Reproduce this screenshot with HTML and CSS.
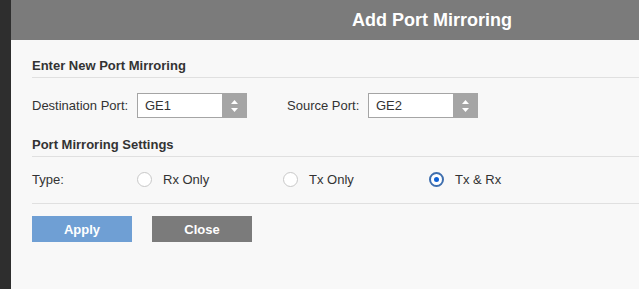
FILE: index.html
```html
<!DOCTYPE html>
<html lang="en">
<head>
    <meta charset="UTF-8">
    <meta name="viewport" content="width=device-width, initial-scale=1.0">
    <title>Add Port Mirroring</title>
    <link rel="stylesheet" href="styles.css">
</head>
<body>
    <div class="sidebar"></div>

    <div class="modal">
        <div class="modal-header">Add Port Mirroring</div>

        <div class="modal-body">
            <h2 class="section-title">Enter New Port Mirroring</h2>
            <div class="form-row">
                <label class="field-label">Destination Port:</label>
                <div class="select-box">
                    <span class="select-value">GE1</span>
                    <span class="select-arrow">
                        <svg width="9" height="14" viewBox="0 0 9 14"><path d="M4.5 1 L8 5 L1 5 Z M4.5 13 L8 9 L1 9 Z" fill="#fff"/></svg>
                    </span>
                </div>
                <label class="field-label short">Source Port:</label>
                <div class="select-box">
                    <span class="select-value">GE2</span>
                    <span class="select-arrow">
                        <svg width="9" height="14" viewBox="0 0 9 14"><path d="M4.5 1 L8 5 L1 5 Z M4.5 13 L8 9 L1 9 Z" fill="#fff"/></svg>
                    </span>
                </div>
            </div>

            <h2 class="section-title second">Port Mirroring Settings</h2>
            <div class="type-row">
                <span class="field-label">Type:</span>
                <label class="radio-option"><span class="radio"></span>Rx Only</label>
                <label class="radio-option"><span class="radio"></span>Tx Only</label>
                <label class="radio-option"><span class="radio checked"></span>Tx &amp; Rx</label>
            </div>

            <div class="actions">
                <button class="btn btn-apply">Apply</button>
                <button class="btn btn-close">Close</button>
            </div>
        </div>
    </div>
</body>
</html>
```

FILE: styles.css
```css
* {
    margin: 0;
    padding: 0;
    box-sizing: border-box;
}

body {
    font-family: "Liberation Sans", Arial, sans-serif;
    font-size: 13px;
    color: #333;
    background: #f8f8f8;
    display: flex;
    height: 100vh;
    overflow: hidden;
}

/* Dark strip on the left */
.sidebar {
    width: 11px;
    flex-shrink: 0;
    background: #2e2e2e;
}

.modal {
    flex: 1;
    min-width: 0;
    background: #f8f8f8;
}

.modal-header {
    height: 40px;
    line-height: 40px;
    background: #7b7b7b;
    color: #fff;
    font-size: 18px;
    font-weight: bold;
    text-align: center;
    padding-left: 214px;
}

.modal-body {
    padding: 18px 0 0 21px;
}

.section-title {
    font-size: 13px;
    font-weight: bold;
    line-height: 15px;
    color: #333;
    padding-bottom: 4px;
    border-bottom: 1px solid #e0e0e0;
}

.section-title.second {
    margin-top: 19px;
}

/* Port selects */
.form-row {
    display: flex;
    align-items: center;
    margin-top: 15px;
}

.field-label {
    width: 105px;
    flex-shrink: 0;
}

.field-label.short {
    width: 81px;
    margin-left: 40px;
}

.select-box {
    width: 110px;
    height: 25px;
    display: flex;
    border: 1px solid #a5a5a5;
    background: #fff;
}

.select-value {
    flex: 1;
    padding-left: 7px;
    line-height: 23px;
}

.select-arrow {
    width: 24px;
    background: #a5a5a5;
    display: flex;
    align-items: center;
    justify-content: center;
}

/* Type radios */
.type-row {
    display: flex;
    align-items: center;
    height: 47px;
    padding: 10px 0 12px;
    border-bottom: 1px solid #e0e0e0;
}

.radio-option {
    width: 146px;
    display: flex;
    align-items: center;
}

.radio {
    width: 15px;
    height: 15px;
    border-radius: 50%;
    border: 1px solid #c8c8c8;
    background: #fff;
    margin-right: 11px;
    display: flex;
    align-items: center;
    justify-content: center;
}

.radio.checked {
    border: 2px solid #3f6fae;
}

.radio.checked::after {
    content: "";
    width: 5px;
    height: 5px;
    border-radius: 50%;
    background: #0f62d6;
}

/* Buttons */
.actions {
    display: flex;
    gap: 20px;
    margin-top: 12px;
}

.btn {
    width: 100px;
    height: 26px;
    border: none;
    color: #fff;
    font-family: "Liberation Sans", Arial, sans-serif;
    font-size: 13px;
    font-weight: bold;
}

.btn-apply {
    background: #6f9fd4;
}

.btn-close {
    background: #7b7b7b;
}
```
